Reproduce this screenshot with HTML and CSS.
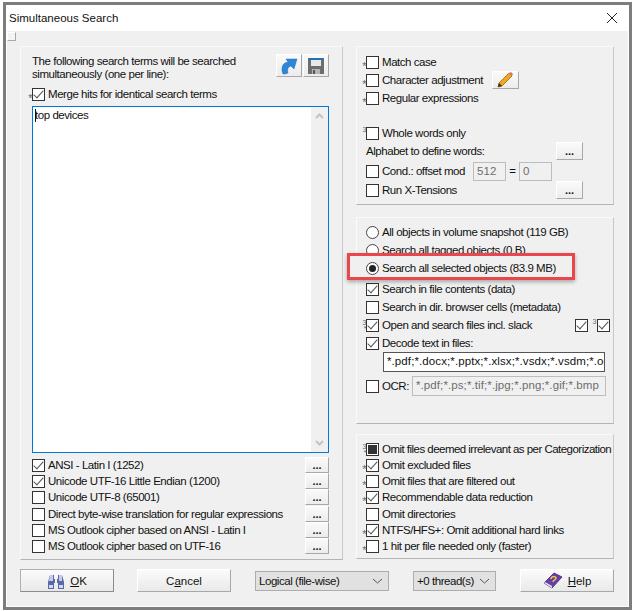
FILE: index.html
```html
<!DOCTYPE html>
<html lang="en">
<head>
<meta charset="UTF-8">
<meta name="viewport" content="width=device-width, initial-scale=1.0">
<title>Simultaneous Search</title>
<link rel="stylesheet" href="styles.css">
</head>
<body>
<div class="window">
  <div class="titlebar">
    <span class="title">Simultaneous Search</span>
    <svg class="close" width="12" height="12" viewBox="0 0 12 12"><path d="M1 1 L11 11 M11 1 L1 11" stroke="#222" stroke-width="1" fill="none"/></svg>
  </div>
  <div class="grip"></div>

  <div class="main">
    <!-- left side -->
    <div class="panel left-panel">
      <div class="intro">
        <div class="intro-text">The following search terms will be searched<br>simultaneously (one per line):</div>
        <button class="btn icon-btn">
          <svg width="18" height="18" viewBox="0 0 18 18"><path d="M3 17 C1 12 2 8 5 6 L8 5 L6 2 L17 2 L14 12 L11 9 C8 10 7 12 8 16 C6 17 4 17 3 17 Z" fill="#2f86d6" stroke="#1f6fbb" stroke-width=".5"/></svg>
        </button>
        <button class="btn icon-btn">
          <svg width="18" height="18" viewBox="0 0 18 18"><path d="M1 1 H17 V17 H1 Z" fill="#6d6d6d"/><rect x="2" y="1" width="14" height="2" fill="#2472b8"/><rect x="4" y="3" width="10" height="6" fill="#e8e8e8"/><rect x="5" y="12" width="8" height="5" fill="#b5b5b5"/><rect x="6" y="13" width="2" height="4" fill="#555"/></svg>
        </button>
      </div>
      <div class="row merge-row"><span class="mark">*</span><span class="box on"></span><span class="lbl">Merge hits for identical search terms</span></div>

      <div class="terms">
        <div class="terms-text"><span class="caret"></span>top devices</div>
        <div class="scrollbar">
          <svg width="9" height="6" viewBox="0 0 9 6"><path d="M1 5 L4.5 1.5 L8 5" stroke="#c4c4c4" stroke-width="2" fill="none"/></svg>
          <svg width="9" height="6" viewBox="0 0 9 6"><path d="M1 1 L4.5 4.5 L8 1" stroke="#c4c4c4" stroke-width="2" fill="none"/></svg>
        </div>
      </div>

      <div class="encodings">
        <div class="row enc"><span class="box on"></span><span class="lbl">ANSI - Latin I (1252)</span><button class="btn dots">...</button></div>
        <div class="row enc"><span class="box on"></span><span class="lbl">Unicode UTF-16 Little Endian (1200)</span><button class="btn dots">...</button></div>
        <div class="row enc"><span class="box"></span><span class="lbl">Unicode UTF-8 (65001)</span><button class="btn dots">...</button></div>
        <div class="row enc gap1"><span class="box"></span><span class="lbl">Direct byte-wise translation for regular expressions</span><button class="btn dots">...</button></div>
        <div class="row enc"><span class="box"></span><span class="lbl">MS Outlook cipher based on ANSI - Latin I</span><button class="btn dots">...</button></div>
        <div class="row enc"><span class="box"></span><span class="lbl">MS Outlook cipher based on UTF-16</span><button class="btn dots">...</button></div>
      </div>
    </div>

    <!-- right side -->
    <div class="side">
      <div class="panel group-match">
        <div class="row r18"><span class="mark">*</span><span class="box"></span><span class="lbl">Match case</span></div>
        <div class="row r18"><span class="mark">*</span><span class="box"></span><span class="lbl">Character adjustment</span>
          <button class="btn pencil-btn">
            <svg width="18" height="16" viewBox="0 0 18 16"><path d="M2 15 L3 11 L13 1 L16 4 L6 14 Z" fill="#f2a71e" stroke="#8a5a10" stroke-width=".7"/><path d="M2 15 L3 11 L6 14 Z" fill="#3a2a14"/><path d="M13 1 L16 4 L17 2 L15 0 Z" fill="#e2707a"/></svg>
          </button>
        </div>
        <div class="row r18"><span class="mark">*</span><span class="box"></span><span class="lbl">Regular expressions</span></div>
        <div class="row r18 gap-top"><span class="mark sup">3</span><span class="box"></span><span class="lbl">Whole words only</span></div>
        <div class="row r18"><span class="mark"></span><span class="lbl plain">Alphabet to define words:</span><button class="btn dots">...</button></div>
        <div class="row r20 gap1"><span class="mark"></span><span class="box"></span><span class="lbl">Cond.: offset mod</span>
          <span class="field num first">512</span><span class="eq">=</span><span class="field num">0</span>
        </div>
        <div class="row r18"><span class="mark"></span><span class="box"></span><span class="lbl">Run X-Tensions</span><button class="btn dots">...</button></div>
      </div>

      <div class="panel group-scope">
        <div class="row r18"><span class="mark"></span><span class="radio"></span><span class="lbl">All objects in volume snapshot (119 GB)</span></div>
        <div class="row r18"><span class="mark"></span><span class="radio"></span><span class="lbl">Search all tagged objects (0 B)</span></div>
        <div class="row r18 selected-row"><span class="mark"></span><span class="radio on"></span><span class="lbl">Search all selected objects (83.9 MB)</span></div>
        <div class="highlight"></div>
        <div class="row r18 gap-top3"><span class="mark"></span><span class="box on"></span><span class="lbl">Search in file contents (data)</span></div>
        <div class="row r18"><span class="mark"></span><span class="box"></span><span class="lbl">Search in dir. browser cells (metadata)</span></div>
        <div class="row r18"><span class="mark stack">3<br>*</span><span class="box on"></span><span class="lbl">Open and search files incl. slack</span>
          <span class="box on push"></span><span class="mark sup inline">3</span><span class="box on end"></span>
        </div>
        <div class="row r18"><span class="mark"></span><span class="box on"></span><span class="lbl">Decode text in files:</span></div>
        <div class="row r20 indent"><span class="field filetypes">*.pdf;*.docx;*.pptx;*.xlsx;*.vsdx;*.vsdm;*.odt;*.ods;*.odp</span></div>
        <div class="row r26 ocr-row"><span class="mark"></span><span class="box"></span><span class="lbl">OCR:</span><span class="field ocr">*.pdf;*.ps;*.tif;*.jpg;*.png;*.gif;*.bmp</span></div>
      </div>

      <div class="panel group-omit">
        <div class="row r16"><span class="mark stack">3<br>*</span><span class="box part"></span><span class="lbl tight">Omit files deemed irrelevant as per Categorization</span></div>
        <div class="row r16"><span class="mark">*</span><span class="box on"></span><span class="lbl">Omit excluded files</span></div>
        <div class="row r16"><span class="mark">*</span><span class="box"></span><span class="lbl">Omit files that are filtered out</span></div>
        <div class="row r16"><span class="mark">*</span><span class="box on"></span><span class="lbl">Recommendable data reduction</span></div>
        <div class="row r16 gap1"><span class="mark"></span><span class="box"></span><span class="lbl">Omit directories</span></div>
        <div class="row r16"><span class="mark">*</span><span class="box on"></span><span class="lbl">NTFS/HFS+: Omit additional hard links</span></div>
        <div class="row r16"><span class="mark">*</span><span class="box"></span><span class="lbl">1 hit per file needed only (faster)</span></div>
      </div>
    </div>
  </div>

  <div class="footer">
    <button class="btn action">
      <svg width="18" height="18" viewBox="0 0 18 18"><path d="M3 3 H7 V7 H8 V11 H7 V17 H1 V10 Z" fill="#5a6aa8"/><path d="M15 3 H11 V7 H10 V11 H11 V17 H17 V10 Z" fill="#5a6aa8"/><path d="M3 3 H6 V9 H2 Z M12 3 H15 V9 H12 Z" fill="#c6cde6"/><rect x="2" y="13" width="4" height="3" fill="#d5dbee"/><rect x="12" y="13" width="4" height="3" fill="#d5dbee"/></svg>
      <span><u>O</u>K</span>
    </button>
    <button class="btn action cancel"><span>C<u>a</u>ncel</span></button>
    <div class="combo logical"><span>Logical (file-wise)</span><svg width="11" height="6" viewBox="0 0 11 6"><path d="M1 1 L5.5 5 L10 1" stroke="#555" fill="none"/></svg></div>
    <div class="combo threads"><span>+0 thread(s)</span><svg width="11" height="6" viewBox="0 0 11 6"><path d="M1 1 L5.5 5 L10 1" stroke="#555" fill="none"/></svg></div>
    <button class="btn action help">
      <svg width="20" height="17" viewBox="0 0 20 17"><path d="M1 11 L11 1 L19 5 L9 16 Z" fill="#6b3fa8" stroke="#3c1f70" stroke-width=".8"/><path d="M1 11 L9 16 L9 14 L2 10 Z" fill="#e6e0f0"/><path d="M8 7 C8 4 13 4 13 6 C13 8 10 8 10 10" stroke="#f4d23c" stroke-width="1.4" fill="none"/></svg>
      <span><u>H</u>elp</span>
    </button>
  </div>
</div>
</body>
</html>
```

FILE: styles.css
```css
* {
  box-sizing: border-box;
}
html, body {
  margin: 0;
  padding: 0;
  background: #fff;
}
body {
  width: 635px;
  height: 611px;
  padding: 2px 3px 1px 3px;
  font-family: "Liberation Sans", Arial, sans-serif;
  font-size: 11.5px;
  letter-spacing: -0.45px;
  color: #111;
  overflow: hidden;
}
.window {
  height: 608px;
  border: 3px solid #7d7d7d;
  background: #f0f0f0;
  display: flex;
  flex-direction: column;
  box-shadow: inset 0 0 0 1px #fff;
}
.titlebar {
  height: 26px;
  margin: 0 1px;
  flex-shrink: 0;
  background: #fff;
  display: flex;
  align-items: center;
  justify-content: space-between;
  padding: 0 10px 0 2px;
}
.title {
  letter-spacing: 0;
}
.grip {
  width: 9px;
  height: 9px;
  margin: 1px 0 0 1px;
  background: #f4f4f4;
  border: 1px solid #fff;
  border-right-color: #a8a8a8;
  border-bottom-color: #a8a8a8;
  flex-shrink: 0;
}
.main {
  display: flex;
  gap: 13px;
  padding: 5px 0 0 14px;
  height: 524px;
  flex-shrink: 0;
}
.panel {
  border: 1px solid #fafafa;
  border-right-color: #c8c8c8;
  border-bottom-color: #b4b4b4;
  position: relative;
}
.left-panel {
  width: 323px;
  height: 514px;
  padding: 7px 13px 0 11px;
}
.side {
  width: 258px;
  display: flex;
  flex-direction: column;
}
.group-match {
  height: 159px;
  padding-top: 6px;
}
.group-scope {
  height: 207px;
  margin-top: 12px;
  padding-top: 5px;
}
.group-omit {
  height: 125px;
  margin-top: 10px;
  padding-top: 6px;
}
.intro {
  display: flex;
  align-items: flex-start;
  height: 31px;
}
.intro-text {
  flex: 1;
  line-height: 13px;
  padding-top: 1px;
}
.row {
  display: flex;
  align-items: center;
  white-space: nowrap;
}
.r16 { height: 16px; }
.r18 { height: 18px; }
.r20 { height: 20px; }
.r26 { height: 26px; }
.gap-top { margin-top: 17px; }
.gap-top3 { margin-top: 3px; }
.gap1 { margin-top: 1px; }
.indent { padding-left: 26px; }
.ocr-row { margin-top: 1px; }
.selected-row {
  position: relative;
  z-index: 1;
}
.mark {
  width: 9px;
  flex-shrink: 0;
  color: #666;
  font-size: 11px;
  text-align: right;
  line-height: 8px;
  padding-top: 8px;
}
.mark.sup {
  font-size: 7px;
  padding-top: 0;
  padding-bottom: 6px;
}
.mark.inline {
  width: 8px;
  margin-right: 1px;
}
.mark.stack {
  font-size: 7px;
  line-height: 6px;
  padding-top: 2px;
}
.box, .radio {
  width: 13px;
  height: 13px;
  flex-shrink: 0;
  border: 1px solid #333;
  background: #fff;
  display: inline-flex;
  align-items: center;
  justify-content: center;
}
.box.on::after {
  content: "";
  width: 4px;
  height: 9px;
  border: solid #555;
  border-width: 0 1.5px 1.5px 0;
  transform: translateY(-1px) rotate(42deg);
}
.box.part::after {
  content: "";
  width: 9px;
  height: 9px;
  background: #333;
}
.box.end {
  margin-right: 3px;
}
.radio {
  border-radius: 50%;
  border-color: #444;
}
.radio.on::after {
  content: "";
  width: 7px;
  height: 7px;
  border-radius: 50%;
  background: #222;
}
.lbl {
  margin-left: 3px;
}
.lbl.plain {
  margin-left: 0;
}
.lbl.tight {
  letter-spacing: -0.53px;
}
.btn {
  font-family: inherit;
  font-size: 11.5px;
  letter-spacing: 0;
  color: #111;
  padding: 0;
  background: linear-gradient(#fafafa, #ececec);
  border: 1px solid #fff;
  border-right-color: #a8a8a8;
  border-bottom-color: #a8a8a8;
  display: inline-flex;
  align-items: center;
  justify-content: center;
  flex-shrink: 0;
}
.icon-btn {
  width: 26px;
  height: 23px;
  margin-left: 1px;
}
.merge-row {
  margin-left: -9px;
  height: 18px;
}
.dots {
  width: 24px;
  height: 16px;
  line-height: 12px;
  font-size: 11px;
  margin-left: auto;
  font-weight: bold;
}
.push {
  margin-left: auto;
}
.group-match .dots {
  width: 27px;
  height: 18px;
  margin-right: 30px;
}
.pencil-btn {
  width: 27px;
  height: 18px;
  margin-left: 9px;
}
.field {
  height: 19px;
  border: 1px solid #bdbdbd;
  background: #f0f0f0;
  color: #6d6d6d;
  padding: 0 3px;
  line-height: 17px;
  overflow: hidden;
  display: block;
  letter-spacing: 0.1px;
}
.num {
  width: 33px;
}
.num.first {
  margin-left: 8px;
}
.eq {
  width: 13px;
  text-align: center;
}
.filetypes {
  width: 222px;
  height: 20px;
  border-color: #555;
  background: #fff;
  color: #111;
}
.ocr {
  width: 194px;
  height: 20px;
  margin-left: 3px;
}
.terms {
  height: 347px;
  margin-top: 3px;
  border: 1px solid #0078d7;
  background: #fff;
  display: flex;
}
.terms-text {
  flex: 1;
  padding: 1px 2px;
  line-height: 14px;
  position: relative;
}
.caret {
  position: absolute;
  left: 2px;
  top: 2px;
  width: 1px;
  height: 13px;
  background: #111;
}
.scrollbar {
  width: 17px;
  background: #f0f0f0;
  display: flex;
  flex-direction: column;
  justify-content: space-between;
  align-items: center;
  padding: 6px 0;
}
.encodings {
  margin-top: 4px;
}
.enc {
  height: 16px;
}
.footer {
  display: flex;
  align-items: center;
  padding: 4px 0 0 14px;
}
.action {
  width: 94px;
  height: 23px;
  gap: 5px;
  border-color: #b0b0b0 #8c8c8c #8c8c8c #b0b0b0;
  background: linear-gradient(#fbfbfb, #e9e9e9);
}
.cancel {
  margin-left: 23px;
  border-color: #fff #a8a8a8 #a8a8a8 #fff;
}
.combo {
  height: 20px;
  background: #e1e1e1;
  border: 1px solid #adadad;
  display: flex;
  align-items: center;
  justify-content: space-between;
  padding: 0 5px 0 3px;
  white-space: nowrap;
}
.logical {
  width: 134px;
  margin-left: 24px;
}
.threads {
  width: 83px;
  margin-left: 24px;
}
.help {
  margin-left: 24px;
  border-color: #fff #a8a8a8 #a8a8a8 #fff;
}
.highlight {
  position: absolute;
  left: -10px;
  top: 35px;
  width: 228px;
  height: 27px;
  border: 3px solid #e8474c;
  background: #f0f0f0;
  box-shadow: 0 2px 4px rgba(0, 0, 0, .3);
}
```
